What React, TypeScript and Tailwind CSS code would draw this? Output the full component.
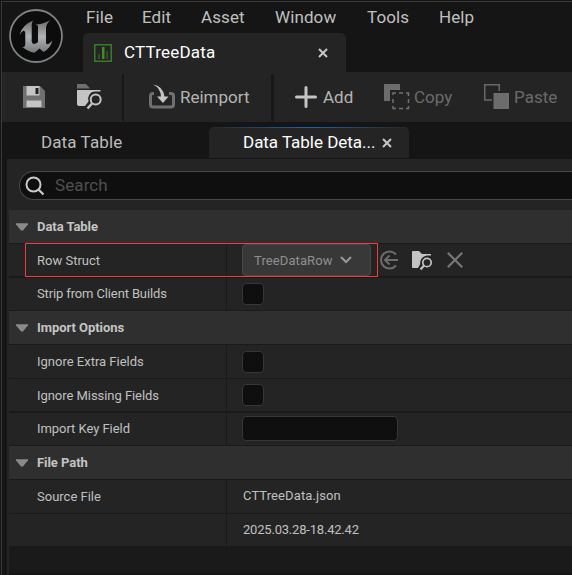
import type { ReactNode } from "react";

function Logo() {
  return (
    <svg width="56" height="56" viewBox="2 2 56 56" className="mt-[6px] ml-[6px] shrink-0">
      <defs>
        <linearGradient id="metal" x1="0" y1="0" x2="0" y2="1">
          <stop offset="0" stopColor="#6b6d6f" />
          <stop offset="0.5" stopColor="#b0b3b5" />
          <stop offset="1" stopColor="#75787a" />
        </linearGradient>
      </defs>
      <circle cx="30" cy="30" r="27" fill="#0c0c0c" />
      <circle cx="30" cy="30" r="26" fill="none" stroke="#7e8385" strokeWidth="1.8" />
      <path
        d="M13.500 29Q16 19 27.500 14.300Q25.500 16 25.700 19V35.500Q26 38 28.500 38Q30.500 37.500 32 36V20.500Q31.500 18.500 29.500 18.500Q36 18.500 44.500 14.300Q40 18 40 22V36.500Q40.200 38.700 42 38.300Q44 37.500 46.300 34.500Q44.500 42.500 37.500 46L33.500 42.500L28.500 46.800Q22 45.800 16.500 41Q19.300 41.500 19.300 37.500V27Q19 24.500 17.300 24.800Q15.500 25.500 13.500 29Z"
        fill="url(#metal)"
      />
    </svg>
  );
}

function SaveIcon() {
  return (
    <svg width="24" height="24" viewBox="0 0 24 24">
      <path d="M1 1h17l5 5v17H1z" fill="#707070" />
      <path d="M4.500 1h13v9.500h-13z" fill="#c4c4c4" />
      <path d="M13.500 3h3v6h-3z" fill="#1e1e1e" />
      <path d="M4.500 15.500h15V22h-15z" fill="#c4c4c4" />
    </svg>
  );
}

function BrowseIcon() {
  return (
    <svg width="26" height="26" viewBox="0 0 26 26">
      <path d="M0 0h9l4 4.500H0z" fill="#707070" />
      <path d="M0 6h23.500v1.500H0z" fill="#c4c4c4" />
      <path d="M0 7h18a8 8 0 0 0-6.500 10.500L8 22H2q-2 0-2-2z" fill="#c4c4c4" />
      <circle cx="18.700" cy="15.500" r="5" fill="#242424" stroke="#c4c4c4" strokeWidth="2" />
      <path d="m15 19.500-4.500 5" stroke="#c4c4c4" strokeWidth="2.500" />
    </svg>
  );
}

function ReimportIcon() {
  return (
    <svg width="26" height="26" viewBox="0 0 26 26">
      <path d="M5 9.500H4Q1.500 9.500 1.500 12v8.500Q1.500 23 4 23h18q2.500 0 2.500-2.500V12q0-2.500-2.500-2.500h-2" fill="none" stroke="#707070" strokeWidth="3" />
      <path d="M4 .5q10 1.500 11.500 12h4L14 19l-6-6.500h4Q11.500 4 4 .5" fill="#c4c4c4" />
    </svg>
  );
}

function Close({ size, color, width }: { size: number; color: string; width: number }) {
  return (
    <svg width={size} height={size} viewBox="0 0 10 10">
      <path d="m1 1 8 8M9 1 1 9" stroke={color} strokeWidth={width} fill="none" />
    </svg>
  );
}

function Tool({ icon, label, className }: { icon: ReactNode; label: string; className: string }) {
  return (
    <div className={`flex h-full items-center ${className}`}>
      {icon}
      <span className="pt-[2px]">{label}</span>
    </div>
  );
}

function Header({ title }: { title: string }) {
  return (
    <div className="flex h-[34px] items-center border-b border-[#1a1a1a] bg-[#2f2f2f] pl-[7px] text-[13px] font-bold text-[#c4c4c4]">
      <svg width="12" height="8" viewBox="0 0 12 8" className="mr-[9px]">
        <path d="M0 .3h12v1L7 7.500H5L0 1.300z" fill="#8a8a8a" />
      </svg>
      <span className="tracking-[-0.05px]">{title}</span>
    </div>
  );
}

function Row({ label, className, labelClass = "", children }: { label: string; className: string; labelClass?: string; children?: ReactNode }) {
  return (
    <div className={`flex border-[#1a1a1a] bg-[#242424] text-[13px] text-[#c0c0c0] ${className}`}>
      <div className={`flex w-[218px] shrink-0 items-center border-r border-[#1a1a1a] pl-7 ${labelClass}`}>{label}</div>
      <div className="flex flex-1 items-center pl-[15px]">{children}</div>
    </div>
  );
}

function Checkbox() {
  return <div className="h-[22px] w-[22px] rounded-[4px] border border-[#363636] bg-[#0f0f0f]" />;
}

export default function App() {
  return (
    <div className="h-[575px] w-[572px] overflow-hidden bg-[#151515] pt-px pl-px font-['Roboto',sans-serif]">
      <div className="flex h-[574px] flex-col border-t border-l border-[#393939]">
        <div className="flex h-[70px]">
          <Logo />
          <div className="ml-[19px] flex flex-1 flex-col">
            <div className="flex h-[31px] items-center pl-[3px] text-[17px] tracking-[0.1px] text-[#c0c0c0]">
              <span className="w-[56px]">File</span>
              <span className="w-[59px]">Edit</span>
              <span className="w-[74px]">Asset</span>
              <span className="w-[92px]">Window</span>
              <span className="w-[72px]">Tools</span>
              <span>Help</span>
            </div>
            <div className="flex h-[39px] w-[263px] items-center rounded-t-[5px] bg-[#242424] pl-[11px]">
              <svg width="18" height="18" viewBox="0 0 18 18">
                <path d="M.75.75h16.500v16.500H.75z" fill="none" stroke="#3a7a28" strokeWidth="1.500" />
                <path d="M4 10h2v5H4zM12 7h2v8h-2z" fill="#28531c" />
                <path d="M8 3h2.500v12H8z" fill="#41892d" />
              </svg>
              <span className="ml-3 w-[194px] pt-px text-[17px] tracking-[0.2px] text-white">CTTreeData</span>
              <Close size={10} color="#c8c8c8" width={2} />
            </div>
          </div>
        </div>

        <div className="flex h-[50px] shrink-0 items-center bg-[#242424] text-[17px] text-[#b5b5b5]">
          <div className="flex w-[120px] items-center pl-5">
            <SaveIcon />
            <div className="ml-[31px]"><BrowseIcon /></div>
          </div>
          <div className="h-[47px] w-[2px] bg-[#181818]" />
          <Tool icon={<ReimportIcon />} label="Reimport" className="w-[147px] gap-[5px] pl-[25px]" />
          <div className="h-[47px] w-[3px] bg-[#181818]" />
          <Tool
            icon={
              <svg width="22" height="22" viewBox="0 0 22 22">
                <path d="M11 1.500v19M1.500 11h19" stroke="#c4c4c4" strokeWidth="3" strokeLinecap="round" />
              </svg>
            }
            label="Add"
            className="w-[110px] gap-[6px] pl-[21px]"
          />
          <div className="flex h-full items-center text-[#6b6b6b]">
            <Tool
              icon={
                <svg width="26" height="26" viewBox="0 0 26 26">
                  <path d="M0 0h16v6H6v11H0z" fill="#6c6c6c" />
                  <path d="M9 11V9h3M15 9h4M22 9h2.500v3M24.500 15v4M24.500 22v2.500H22M19 24.500h-4M12 24.500H9V22M9 19v-4" fill="none" stroke="#707070" strokeWidth="1.500" />
                </svg>
              }
              label="Copy"
              className="w-[100px] gap-[4px]"
            />
            <Tool
              icon={
                <svg width="26" height="26" viewBox="0 0 26 26">
                  <path d="M8 16H.75V.75h14.500V7" fill="none" stroke="#686868" strokeWidth="1.500" />
                  <path d="M9.500 9H25v16H9.500z" fill="#6c6c6c" />
                </svg>
              }
              label="Paste"
              className="gap-[4px]"
            />
          </div>
        </div>

        <div className="flex h-[37px] shrink-0 items-center text-[17px]">
          <span className="w-[207px] pt-[5px] pl-[39px] tracking-[0.1px] text-[#bcbcbc]">Data Table</span>
          <div className="mt-[4px] flex h-[31px] w-[200px] flex-col overflow-hidden rounded-t-[5px] bg-[#242424]">
            <div className="h-px bg-gradient-to-r from-[#242424] via-[#0f65b5] to-[#242424]" />
            <div className="flex flex-1 items-center pl-[34px] text-white">
              <span className="w-[139px] tracking-[-0.03px]">Data Table Deta...</span>
              <Close size={10} color="#c8c8c8" width={2} />
            </div>
          </div>
        </div>

        <div className="ml-[5px] flex flex-1 flex-col bg-[#242424] pl-[2px]">
          <div className="mt-[12px] ml-[10px] flex h-[29px] items-center rounded-l-full border border-r-0 border-[#484848] bg-[#0f0f0f] pl-[5px] text-[17px] tracking-[0.1px] text-[#505050]">
            <svg width="20" height="20" viewBox="0 0 20 20" className="mr-[10px]">
              <circle cx="8.500" cy="8.500" r="7" fill="none" stroke="#c8c8c8" strokeWidth="2" />
              <path d="m13.500 13.500 5 5" stroke="#c8c8c8" strokeWidth="2.200" />
            </svg>
            <span className="pt-px">Search</span>
          </div>
          <div className="mt-[10px] flex flex-1 flex-col border-b-2 border-[#151515] bg-[#1a1a1a]">
            <Header title="Data Table" />
            <div className="relative">
              <Row label="Row Struct" className="h-[34px] border-b-2" labelClass="pt-[2px]">
                <div className="flex h-8 w-[129px] items-center rounded-[4px] border border-[#484848] bg-[#383838] pl-[11px] text-[#909090]">
                  <span className="w-[86px] pt-[2px] tracking-[0.1px]">TreeDataRow</span>
                  <svg width="12" height="8" viewBox="0 0 12 8">
                    <path d="m1 1 5 5 5-5" fill="none" stroke="#999" strokeWidth="2" />
                  </svg>
                </div>
                <svg width="20" height="20" viewBox="0 0 20 20" className="ml-[8px]">
                  <path d="M17 4.500A8.500 8.500 0 1 0 17 15.500M6 10h13M10.500 5.500 6 10l4.500 4.500" fill="none" stroke="#6c6c6c" strokeWidth="2" />
                </svg>
                <svg width="21" height="21" viewBox="0 0 21 21" className="ml-[13px]">
                  <path d="M0 2Q0 1 1 1h6l3 3h9v1.500h-4q-7 1-7 9L6 18H1q-1 0-1-1z" fill="#c4c4c4" />
                  <circle cx="15" cy="12.500" r="4.200" fill="#242424" stroke="#c4c4c4" strokeWidth="1.700" />
                  <path d="m12 15.500-3.500 4" stroke="#c4c4c4" strokeWidth="2" />
                </svg>
                <div className="ml-[13px]"><Close size={18} color="#777" width={1.2} /></div>
              </Row>
              <div className="absolute top-[-1px] left-[16px] h-[34px] w-[353px] border border-[#f23a3a]" />
            </div>
            <Row label="Strip from Client Builds" className="h-[33px] border-b" labelClass="tracking-[-0.13px]"><Checkbox /></Row>
            <Header title="Import Options" />
            <Row label="Ignore Extra Fields" className="h-[34px] border-b"><Checkbox /></Row>
            <Row label="Ignore Missing Fields" className="h-[34px] border-b-2" labelClass="pt-[2px] tracking-[-0.05px]"><Checkbox /></Row>
            <Row label="Import Key Field" className="h-[33px] border-b" labelClass="tracking-[-0.05px]">
              <div className="mb-[2px] h-[25px] w-[156px] rounded-[4px] border border-[#363636] bg-[#0f0f0f]" />
            </Row>
            <Header title="File Path" />
            <Row label="Source File" className="h-[34px] border-b">
              <span className="pb-px pl-px tracking-[0.1px]">CTTreeData.json</span>
            </Row>
            <Row label="" className="h-[32px]">
              <span className="pl-px tracking-[-0.2px]">2025.03.28-18.42.42</span>
            </Row>
          </div>
        </div>
      </div>
    </div>
  );
}
